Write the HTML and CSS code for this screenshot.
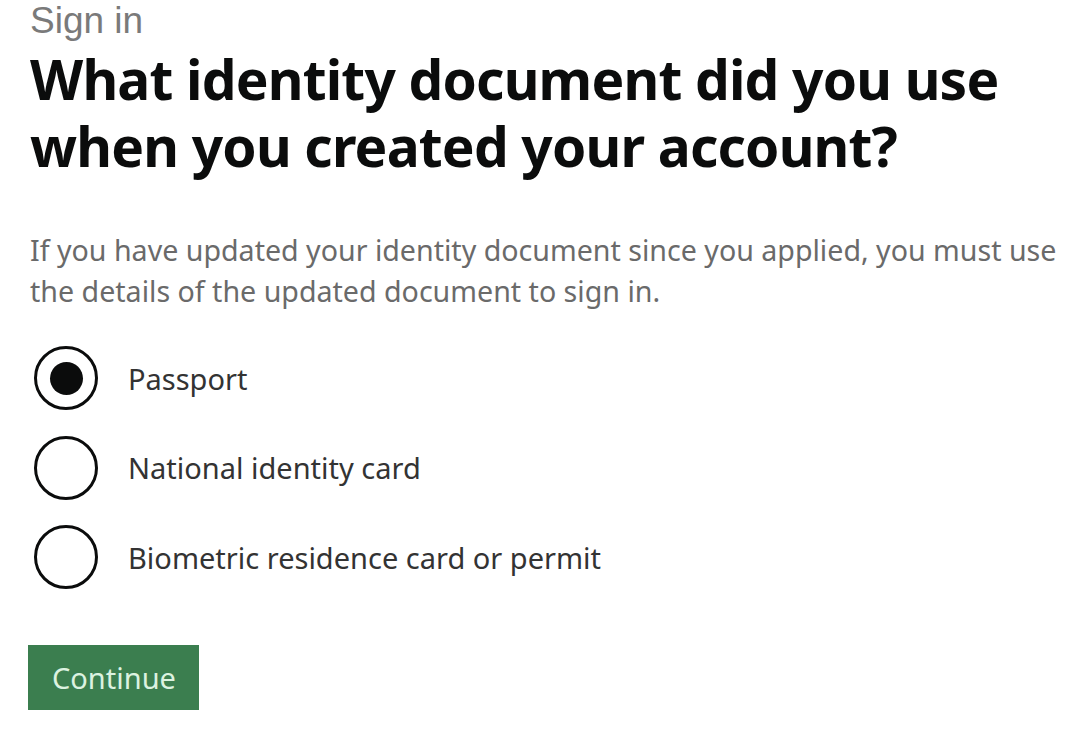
FILE: index.html
```html
<!DOCTYPE html>
<html lang="en">
<head>
<meta charset="utf-8">
<title>Sign in</title>
<link rel="stylesheet" href="styles.css">
</head>
<body>
<main class="page">
  <span class="caption">Sign in</span>
  <h1 class="heading">What identity document did you use when you created your account?</h1>
  <p class="hint">If you have updated your identity document since you applied, you must use the details of the updated document to sign in.</p>
  <div class="radios">
    <label class="radio">
      <span class="radio-circle checked"></span>
      <span class="radio-label">Passport</span>
    </label>
    <label class="radio">
      <span class="radio-circle"></span>
      <span class="radio-label">National identity card</span>
    </label>
    <label class="radio">
      <span class="radio-circle"></span>
      <span class="radio-label">Biometric residence card or permit</span>
    </label>
  </div>
  <button class="button" type="button">Continue</button>
</main>
</body>
</html>
```
FILE: styles.css
```css
html, body {
  margin: 0;
  padding: 0;
  background: #ffffff;
}
.page {
  font-family: "Noto Sans", "Liberation Sans", sans-serif;
  padding: 0 0 0 30px;
  display: flex;
  flex-direction: column;
  align-items: flex-start;
}
.caption {
  font-family: "Liberation Sans", Arial, sans-serif;
  font-size: 37px;
  line-height: 41px;
  color: #7a7a7a;
}
.heading {
  font-size: 55px;
  line-height: 67px;
  font-weight: 700;
  color: #0b0c0c;
  margin: 4px 0 0;
  letter-spacing: -0.8px;
}
.hint {
  font-size: 28.6px;
  line-height: 41px;
  color: #6a6a6a;
  margin: 50px 0 0;
}
.radios {
  display: flex;
  flex-direction: column;
  gap: 25.5px;
  margin-top: 35px;
}
.radio {
  display: flex;
  align-items: center;
  gap: 30px;
  padding-left: 4px;
}
.radio-circle {
  width: 58px;
  height: 58px;
  border: 3.5px solid #0b0c0c;
  border-radius: 50%;
  display: flex;
  align-items: center;
  justify-content: center;
}
.radio-circle.checked::after {
  content: "";
  width: 33px;
  height: 33px;
  border-radius: 50%;
  background: #0b0c0c;
}
.radio-label {
  font-size: 29px;
  color: #333333;
}
.button {
  margin: 56px 0 0 -2px;
  font-family: "Noto Sans", "Liberation Sans", sans-serif;
  font-size: 29px;
  line-height: 36px;
  color: #dcf2e0;
  background: #3b7e4f;
  border: 0;
  border-radius: 0;
  box-shadow: 0 3px 0 #1e3d28;
  padding: 15px 23px 14px 24px;
}
```
